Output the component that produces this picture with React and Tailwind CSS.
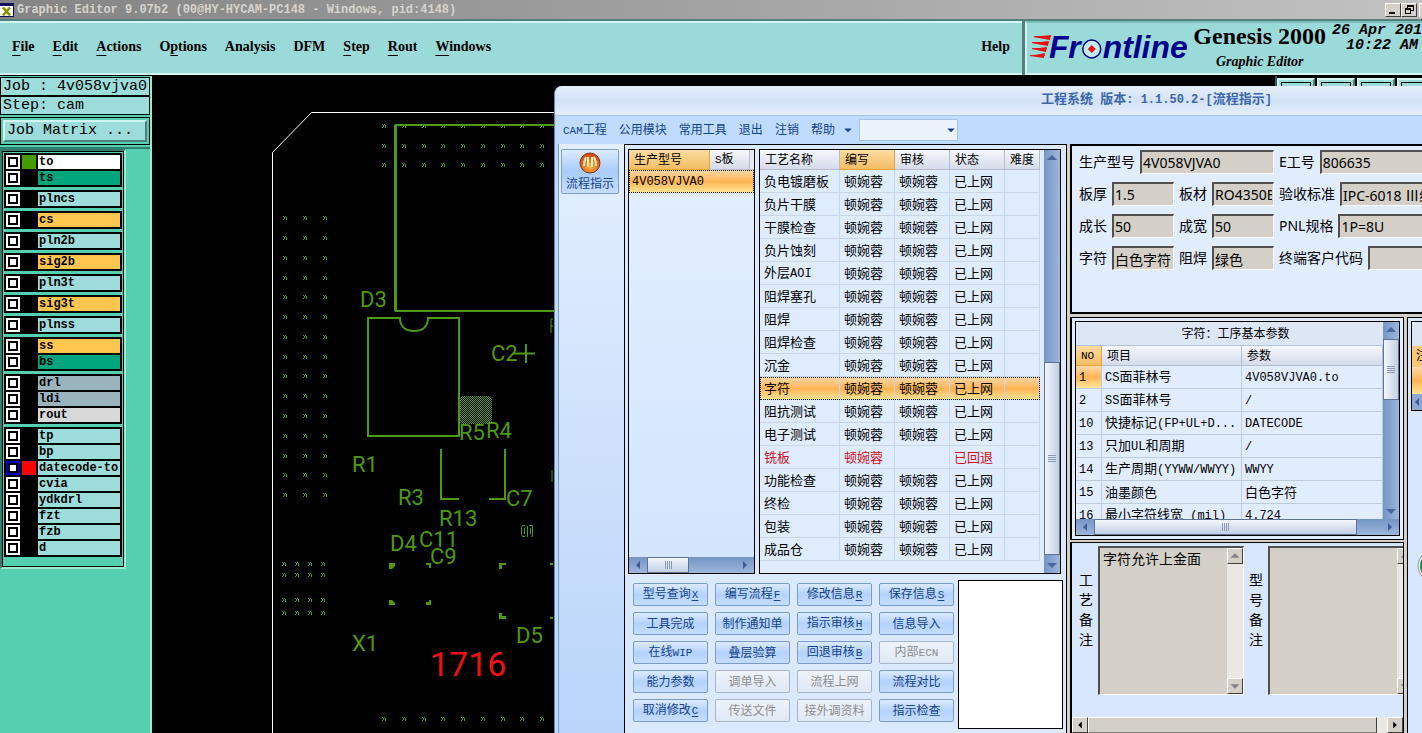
const layerGroups = [
  [
    { name: 'to', bg: 'bg-white', swatch: 'bg-[#449c00]' },
    { name: 'ts', bg: 'bg-[#00a57d]' },
  ],
  [{ name: 'plncs', bg: 'bg-[#9cdcda]' }],
  [{ name: 'cs', bg: 'bg-[#ffc64f]' }],
  [{ name: 'pln2b', bg: 'bg-[#9cdcda]' }],
  [{ name: 'sig2b', bg: 'bg-[#ffc64f]' }],
  [{ name: 'pln3t', bg: 'bg-[#9cdcda]' }],
  [{ name: 'sig3t', bg: 'bg-[#ffc64f]' }],
  [{ name: 'plnss', bg: 'bg-[#9cdcda]' }],
  [
    { name: 'ss', bg: 'bg-[#ffc64f]' },
    { name: 'bs', bg: 'bg-[#00a57d]' },
  ],
  [
    { name: 'drl', bg: 'bg-[#9ab4bd]' },
    { name: 'ldi', bg: 'bg-[#9ab4bd]' },
    { name: 'rout', bg: 'bg-[#d9d9d9]' },
  ],
  [
    { name: 'tp', bg: 'bg-[#9cdcda]' },
    { name: 'bp', bg: 'bg-[#9cdcda]' },
    { name: 'datecode-to', bg: 'bg-[#9cdcda]', swatch: 'bg-[#ff0000]', active: true },
    { name: 'cvia', bg: 'bg-[#9cdcda]' },
    { name: 'ydkdrl', bg: 'bg-[#9cdcda]' },
    { name: 'fzt', bg: 'bg-[#9cdcda]' },
    { name: 'fzb', bg: 'bg-[#9cdcda]' },
    { name: 'd', bg: 'bg-[#9cdcda]' },
  ],
]

// [before, mnemonic, after]
const editorMenu = [
  ['', 'F', 'ile'],
  ['', 'E', 'dit'],
  ['', 'A', 'ctions'],
  ['O', 'p', 'tions'],
  ['Analysis', '', ''],
  ['DFM', '', ''],
  ['', 'S', 'tep'],
  ['', 'R', 'out'],
  ['', 'W', 'indows'],
]

const processNames = [
  '负电镀磨板', '负片干膜', '干膜检查', '负片蚀刻', '外层AOI', '阻焊塞孔', '阻焊', '阻焊检查', '沉金',
  '字符', '阻抗测试', '电子测试', '铣板', '功能检查', '终检', '包装', '成品仓',
]

const actions = [
  { label: '型号查询', hotkey: 'X' },
  { label: '编写流程', hotkey: 'F' },
  { label: '修改信息', hotkey: 'R' },
  { label: '保存信息', hotkey: 'S' },
  { label: '工具完成' },
  { label: '制作通知单' },
  { label: '指示审核', hotkey: 'H' },
  { label: '信息导入' },
  { label: '在线WIP' },
  { label: '叠层验算' },
  { label: '回退审核', hotkey: 'B' },
  { label: '内部ECN', disabled: true },
  { label: '能力参数' },
  { label: '调单导入', disabled: true },
  { label: '流程上网', disabled: true },
  { label: '流程对比' },
  { label: '取消修改', hotkey: 'C' },
  { label: '传送文件', disabled: true },
  { label: '接外调资料', disabled: true },
  { label: '指示检查' },
]

const params = [
  ['1', 'CS面菲林号', '4V058VJVA0.to'],
  ['2', 'SS面菲林号', '/'],
  ['10', '快捷标记(FP+UL+D...', 'DATECODE'],
  ['13', '只加UL和周期', '/'],
  ['14', '生产周期(YYWW/WWYY)', 'WWYY'],
  ['15', '油墨颜色', '白色字符'],
  ['16', '最小字符线宽 (mil)', '4.724'],
]

// Latin runs are set in a mono face one step smaller than the Chinese text
function Mixed({ text, small }) {
  return text.split(/([\x20-\x7e]+)/).map((part, i) => {
    if (i % 2 === 0) return part
    return (
      <span key={i} className={`whitespace-pre font-['Liberation_Mono',monospace] ${small ? 'text-[11px]' : 'text-[12px]'}`}>
        {part}
      </span>
    )
  })
}

function Arrow({ dir, className }) {
  const d = {
    up: 'M0 6h10L5 1z',
    down: 'M0 2h10L5 7z',
    left: 'M7 0v8L3 4z',
    right: 'M3 0v8l4-4z',
  }[dir]
  return (
    <svg width="10" height="8" viewBox="0 0 10 8" className={className} aria-hidden="true">
      <path d={d} fill="currentColor" />
    </svg>
  )
}

function VScroll({ before, thumb }) {
  return (
    <div className="flex w-4 shrink-0 flex-col items-center bg-gradient-to-r from-[#7595c4] to-[#9db6dc] text-[#4a669c]" aria-hidden="true">
      <div className="flex h-4 shrink-0 items-center"><Arrow dir="up" /></div>
      <div className={before} />
      <div className={`flex w-full flex-col items-center justify-center gap-px border border-[#5f7396] bg-gradient-to-r from-[#f2f5fb] via-[#dbe2f0] to-[#c3cfe4] ${thumb}`}>
        {[0, 1, 2, 3].map((n) => <i key={n} className="h-px w-2 bg-[#8d9ab5]" />)}
      </div>
      <div className="flex-1" />
      <div className="flex h-4 shrink-0 items-center"><Arrow dir="down" /></div>
    </div>
  )
}

function HScroll({ thumb }) {
  return (
    <div className="flex h-4 shrink-0 items-center bg-gradient-to-b from-[#7595c4] to-[#9db6dc] text-[#3f5c95]" aria-hidden="true">
      <div className="flex w-[18px] justify-center"><Arrow dir="left" /></div>
      <div className={`flex h-full items-center justify-center gap-px border border-[#5f7396] bg-gradient-to-b from-[#f2f5fb] via-[#dbe2f0] to-[#c3cfe4] ${thumb}`}>
        {[0, 1, 2, 3].map((n) => <i key={n} className="h-2 w-px bg-[#8d9ab5]" />)}
      </div>
      <div className="flex-1" />
      <div className="flex w-[18px] justify-center"><Arrow dir="right" /></div>
    </div>
  )
}

function ClassicScrollButton({ dir, dim }) {
  return (
    <div className={`flex size-4 shrink-0 items-center justify-center border border-t-white border-l-white border-r-[#404040] border-b-[#404040] bg-[#d4d0c8] ${dim ? 'text-[#848284]' : 'text-black'}`}>
      <Arrow dir={dir} className="scale-90" />
    </div>
  )
}

function TitleBar() {
  return (
    <header className="flex h-[19px] shrink-0 items-center justify-between overflow-hidden bg-gradient-to-r from-[#848484] to-[#c2c2c2]">
      <div className="flex items-center gap-[3px]">
        <svg width="14" height="14" viewBox="0 0 14 14" aria-hidden="true">
          <path d="M0 0h14v14H0z" fill="#101060" />
          <path d="M0 3h13v10H0z" fill="#fff" />
          <path d="M3 4.500l7 8M10 4.500l-7 8" stroke="#8c8c00" strokeWidth="2.500" />
        </svg>
        <h1 className="font-['Liberation_Mono',monospace] text-[12px] leading-4 font-bold whitespace-pre text-[#d6d3ce]">
          Graphic Editor 9.07b2 (00@HY-HYCAM-PC148 - Windows, pid:4148)
        </h1>
      </div>
      <div className="flex">
        <button aria-label="Minimize" className="flex h-[14px] w-4 items-end border border-t-white border-l-white border-r-[#404040] border-b-[#404040] bg-[#d4d0c8] p-[2px]">
          <i className="ml-px h-[2px] w-[6px] bg-black" />
        </button>
        <button aria-label="Restore" className="flex h-[14px] w-4 items-center justify-center border border-t-white border-l-white border-r-[#404040] border-b-[#404040] bg-[#d4d0c8]">
          <svg width="9" height="9" viewBox="0 0 9 9" fill="none" stroke="#000" shapeRendering="crispEdges">
            <path d="M2.500 3V.500h6v5H6M2 1h7M.500 3.500h5v5h-5zM0 4h6" />
          </svg>
        </button>
        <div className="ml-[2px] h-[14px] w-[3px] border-t border-l border-white bg-[#d4d0c8]" />
      </div>
    </header>
  )
}

function FrontlineLogo() {
  return (
    <svg width="162" height="36" viewBox="0 0 162 36" role="img" aria-label="Frontline">
      <path d="M3 7l18-2-1 5zM1 13l18-2-1 5zM2 19l15-2-1 5zM0 26l15-3-1 5z" fill="#e81010" />
      <path d="M4 6.500h17M2 12.500h17M2 18.500h15M0 25.500h15" stroke="#e81010" />
      <g fill="#00008c" fontFamily="'Liberation Sans', sans-serif" fontWeight="bold" fontStyle="italic" fontSize="32">
        <text x="19" y="28">Fr</text>
        <text x="73" y="28">ntline</text>
      </g>
      <circle cx="62" cy="19" r="9" fill="#c4ecee" stroke="#00008c" strokeWidth="1.500" />
      <path d="M62 15l4 4-4 4-4-4z" fill="#e81010" />
    </svg>
  )
}

function EditorMenuBar() {
  return (
    <div className="flex h-14 shrink-0 gap-[3px] border-t-2 border-[#557f7c] bg-[#557f7c] font-['Liberation_Serif',serif] text-black">
      <nav className="flex min-w-0 flex-1 items-center justify-between border-t-2 border-b-2 border-t-[#d2f4f2] border-b-[#d2f4f2] bg-[#9adbda] px-3 pb-[2px] text-[14px] leading-5 font-bold">
        <div className="flex gap-[18px]">
          {editorMenu.map(([pre, key, post]) => (
            <a key={pre + key + post} href="#">
              {pre}
              <span className="underline underline-offset-4">{key}</span>
              {post}
            </a>
          ))}
        </div>
        <a href="#">Help</a>
      </nav>
      <div className="flex w-[397px] shrink-0 items-center overflow-hidden border-t-2 border-b-2 border-l-2 border-t-[#7cbcb9] border-b-[#d2f4f2] border-l-[#d2f4f2] bg-[#9adbda] pl-[3px]">
        <FrontlineLogo />
        <div className="ml-[2px] flex shrink-0 flex-col items-center">
          <p className="text-[24px] leading-6 font-bold">Genesis 2000</p>
          <p className="pt-1 text-[14px] leading-5 font-bold italic">Graphic Editor</p>
        </div>
        <div className="ml-[6px] shrink-0 self-start font-['Liberation_Mono',monospace] text-[15px] leading-[15px] font-bold whitespace-pre italic">
          <p>26 Apr 201</p>
          <p className="pl-[14px]">10:22 AM</p>
        </div>
      </div>
    </div>
  )
}

function LayerRow({ layer }) {
  return (
    <label className="flex h-4 items-start gap-[2px] pt-[2px]">
      <input
        type="checkbox"
        className={`size-[14px] shrink-0 appearance-none border-2 bg-white shadow-[inset_0_0_0_2px_#000] ${layer.active ? 'border-[#0000c8]' : 'border-white'}`}
      />
      <span className={`size-[14px] shrink-0 ${layer.swatch || 'bg-black'}`} />
      <span className={`h-[14px] min-w-0 flex-1 pl-px text-[12px] leading-[14px] font-bold whitespace-nowrap ${layer.bg}`}>
        {layer.name}
      </span>
    </label>
  )
}

function LayerSidebar() {
  return (
    <aside className="w-[152px] shrink-0 border-r-2 border-[#9ee8d2] bg-[#54cfb0] font-['Liberation_Mono',monospace] text-black">
      <div className="border-b-2 border-[#2f7f6c] pt-px pb-[2px]">
        <p className="h-[19px] border border-black bg-[#9cdcda] pl-[2px] text-[15px] leading-[17px] whitespace-pre">Job : 4v058vjva0</p>
        <p className="h-[19px] border border-black bg-[#9cdcda] pl-[2px] text-[15px] leading-[17px] whitespace-pre">Step: cam</p>
        <div className="mt-[2px] border border-black p-[2px]">
          <button className="block h-[22px] w-full border-2 border-t-[#d2f4f2] border-l-[#d2f4f2] border-r-[#4d8280] border-b-[#4d8280] bg-[#9cdcda] pl-[2px] text-left text-[15px] leading-[18px] whitespace-pre">
            Job Matrix ...
          </button>
        </div>
      </div>
      <div className="w-[126px] border-2 border-t-[#2f7f6c] border-l-[#2f7f6c] border-r-[#9ee8d2] border-b-[#9ee8d2]">
        <div className="flex flex-col gap-[3px] border border-black px-px pt-px pb-[9px]">
          {layerGroups.map((group) => (
            <div key={group[0].name} className="bg-black px-[2px] pb-[2px]">
              {group.map((layer) => <LayerRow key={layer.name} layer={layer} />)}
            </div>
          ))}
        </div>
      </div>
    </aside>
  )
}

const topX = [384, 404, 424, 443, 463, 483, 503, 522, 542]
const vias = [
  ...[126, 146, 165, 719].flatMap((y) => topX.map((x) => [x, y])),
  ...[218, 238, 258, 278, 297, 317, 337, 357, 376, 396, 416, 436, 456, 475, 495].flatMap((y) => [285, 305, 325].map((x) => [x, y])),
  ...[564, 575, 600, 613].flatMap((y) => [284, 297, 310, 323].map((x) => [x, y])),
]

const designators = [
  ['D3', 360, 307], ['C2', 491, 361], ['R5', 459, 440], ['R4', 486, 438], ['R1', 352, 472],
  ['R3', 398, 505], ['C7', 506, 506], ['R13', 439, 526], ['D4', 390, 551], ['C11', 419, 547],
  ['C9', 430, 564], ['X1', 352, 651], ['D5', 516, 643],
]

function BoardCanvas() {
  return (
    <main className="min-w-0 flex-1 bg-black">
      <svg width="100%" height="100%" role="img" aria-label="PCB layer view">
        <defs>
          <pattern id="hatch" width="2" height="2" patternUnits="userSpaceOnUse">
            <path d="M0 0h1v1H0zM1 1h1v1H1z" fill="#4c9a10" shapeRendering="crispEdges" />
          </pattern>
        </defs>
        <g transform="translate(-152 -76)" fill="none" stroke="#4c9a10">
          <path d="M272.500 733V152.500L311.500 112.500H640" stroke="#fff" />
          <path d="M640 125H396V311H640" strokeWidth="2" shapeRendering="crispEdges" />
          <path d="M395.500 125V311" strokeWidth="3" shapeRendering="crispEdges" />
          <path d="M368 436V318H400c0 8 5 13 14 13s14-5 14-13H459V436z" strokeWidth="2" />
          <path d="M513 353.500h22M526 344v19" strokeWidth="2" />
          <path d="M440.500 449V499h18M504.500 449V499h-16" strokeWidth="2" shapeRendering="crispEdges" />
          <rect x="460" y="396" width="32" height="28" rx="4" fill="url(#hatch)" stroke="none" />
          <path d="M525 525.500h-2.500l-1 2v7l1 2h2.500M524.500 528v6M527.500 526v11M529 525.500h3.500v11h-1M530.500 528v6" />
          <path d="M553 319h-2v14M553 326h-2M552 470v12" />
          <path
            fill="#4c9a10"
            stroke="none"
            d="M389 563h6v3l-3 3h-3zM426 563h5v5h-2v-3h-3zM389 600h3l3 3v2h-6zM431 600v5h-5v-3h3v-2zM499 563h7v2h-4v4h-3zM499 613h3v3h4v3h-7zM550 563h3v2h-3zM550 617h3v2h-3z"
          />
          {vias.map(([x, y]) => (
            <path key={`${x}-${y}`} d={`M${x - 2} ${y - 1.5}h1m1 0h1M${x - 1} ${y - 0.5}h1m1 0h1M${x - 1} ${y + 0.5}h1m1 0h1M${x - 2} ${y + 1.5}h1m2 0h1`} shapeRendering="crispEdges" />
          ))}
        </g>
        <g transform="translate(-152 -76)" fill="#4c9a10" fontFamily="Roboto, sans-serif" fontSize="22">
          {designators.map(([name, x, y]) => <text key={name} x={x} y={y}>{name}</text>)}
          <text x="430" y="676" fill="#ee1111" fontFamily="'Liberation Sans Narrow', Roboto, sans-serif" fontSize="34">1716</text>
        </g>
      </svg>
    </main>
  )
}

function EditorToolStrip() {
  return (
    <div className="flex w-[147px] shrink-0 gap-[2px] overflow-hidden border-l-2 border-[#2f5f58] bg-black pt-[2px]">
      {['a', 'b', 'c', 'd'].map((id) => (
        <button key={id} aria-label={`Tool ${id}`} className="h-9 w-[38px] shrink-0 border-2 border-t-[#d2f4f2] border-l-[#d2f4f2] border-r-[#4d8280] border-b-[#4d8280] bg-[#9cdcda] p-[2px]">
          <span className="block h-full border border-black" />
        </button>
      ))}
    </div>
  )
}

function AppMenu() {
  return (
    <nav className="flex h-7 shrink-0 items-center bg-[#bfdbff] pl-2 text-[12px] leading-4 text-[#15428b]">
      <div className="flex gap-3">
        {['CAM工程', '公用模块', '常用工具', '退出', '注销', '帮助'].map((item) => (
          <a key={item} href="#"><Mixed text={item} small /></a>
        ))}
      </div>
      <Arrow dir="down" className="ml-2 mr-[6px] scale-75" />
      <div className="relative flex items-center">
        <select aria-label="快速查找" className="h-[22px] w-[99px] appearance-none border border-[#a7c3ea] bg-[#eaf2fb]" />
        <Arrow dir="down" className="pointer-events-none absolute right-[2px] scale-75" />
      </div>
    </nav>
  )
}

function ModuleBar() {
  return (
    <aside className="w-[66px] shrink-0 border-l border-[#6f9dd9] bg-gradient-to-b from-[#e3efff] via-[#cfe1fb] to-[#b9d5fa] pt-[5px] pl-[2px]">
      <button className="flex h-[45px] w-[58px] flex-col items-center rounded-xs border border-[#7f9dc8] bg-gradient-to-b from-[#dcebff] via-[#a9cbfb] to-[#c6defe] text-[12px] leading-4 text-[#15428b]">
        <svg width="24" height="26" viewBox="0 0 24 26" aria-hidden="true">
          <defs>
            <radialGradient id="ball" cx=".5" cy=".7" r=".6">
              <stop offset="0" stopColor="#ffb640" />
              <stop offset="1" stopColor="#dd4a10" />
            </radialGradient>
          </defs>
          <circle cx="12" cy="13" r="10" fill="url(#ball)" stroke="#7c3a20" />
          <path d="M6 16c0-4 1-7 2-9M10 17V7M14 17V7M18 16c0-4-1-7-2-9" stroke="#fff0c0" strokeWidth="2" fill="none" />
        </svg>
        流程指示
      </button>
    </aside>
  )
}

const headCell = 'h-5 border-r border-b border-[#b3bdd1] bg-gradient-to-b from-[#f6f8fc] to-[#d5dbea] p-0 pl-[5px] text-left font-normal'
const headHot = 'h-5 border-r border-b border-[#e8a33c] bg-gradient-to-b from-[#fbdca0] to-[#f3bd62] p-0 pl-[5px] text-left font-normal'
const hotRow = 'bg-gradient-to-b from-[#ffd9a5] via-[#ffb454] to-[#ffe695] outline outline-1 -outline-offset-1 outline-dotted outline-black'

function ModelList() {
  return (
    <div className="flex w-[127px] shrink-0 flex-col border border-black bg-gradient-to-b from-[#e3efff] to-[#d2e4fd]">
      <table className="w-full table-fixed border-separate border-spacing-0 text-[12px] leading-4">
        <thead>
          <tr>
            <th className={`w-[81px] ${headHot}`}>生产型号</th>
            <th className={`w-10 ${headCell}`}><Mixed text="S板" small /></th>
            <th className="h-5 border-b border-[#b3bdd1] bg-[#e4e9f3]" />
          </tr>
        </thead>
        <tbody>
          <tr className={hotRow}>
            <td colSpan="3" className="h-[23px] p-0 pl-[3px]"><Mixed text="4V058VJVA0" /></td>
          </tr>
        </tbody>
      </table>
      <div className="flex-1" />
      <HScroll thumb="w-[42px]" />
    </div>
  )
}

function ProcessTable() {
  const cell = 'h-[23px] border-r border-b border-[#c9d6e8] p-0 pl-1 whitespace-nowrap'
  return (
    <div className="flex min-w-0 flex-1 border border-black bg-[#deecfd]">
      <div className="min-w-0 flex-1 pr-1">
        <table className="w-full table-fixed border-separate border-spacing-0 text-[13px] leading-4">
          <thead className="text-[12px]">
            <tr>
              <th className={`w-20 ${headCell}`}>工艺名称</th>
              <th className={`w-[55px] ${headHot}`}>编写</th>
              <th className={`w-[55px] ${headCell}`}>审核</th>
              <th className={`w-[55px] ${headCell}`}>状态</th>
              <th className={headCell}>难度</th>
            </tr>
          </thead>
          <tbody>
            {processNames.map((name) => {
              const returned = name === '铣板'
              return (
                <tr key={name} className={name === '字符' ? hotRow : returned ? 'text-[#d01020]' : ''}>
                  <td className={cell}><Mixed text={name} /></td>
                  <td className={cell}>顿婉蓉</td>
                  <td className={cell}>{returned ? '' : '顿婉蓉'}</td>
                  <td className={cell}>{returned ? '已回退' : '已上网'}</td>
                  <td className={cell} />
                </tr>
              )
            })}
          </tbody>
        </table>
      </div>
      <VScroll before="h-[196px]" thumb="h-[193px]" />
    </div>
  )
}

function ActionGrid() {
  return (
    <div className="flex justify-between pl-[5px]">
      <div className="grid grid-cols-4 content-start gap-x-[7px] gap-y-[6px] pt-[3px]">
        {actions.map(({ label, hotkey, disabled }) => (
          <button
            key={label}
            disabled={disabled}
            className={`h-[23px] w-[75px] rounded-xs border text-[12px] leading-4 whitespace-nowrap ${
              disabled
                ? 'border-[#a8b4c8] bg-gradient-to-b from-[#eef3fa] to-[#dfe8f5] text-[#8d8d8d]'
                : 'border-[#7a9bcb] bg-gradient-to-b from-[#dceaff] via-[#b4d2ff] to-[#c4dcff] text-[#15428b]'
            }`}
          >
            <Mixed text={label} small />
            {hotkey && <span className="ml-px font-['Liberation_Mono',monospace] text-[11px] underline underline-offset-2">{hotkey}</span>}
          </button>
        ))}
      </div>
      <div className="h-[149px] w-[105px] border border-black bg-white" />
    </div>
  )
}

function Field({ label, value, className }) {
  return (
    <label className={`flex shrink-0 items-center gap-[5px] ${className}`}>
      <span className="shrink-0">{label}</span>
      <input
        readOnly
        defaultValue={value}
        className="h-6 w-full min-w-0 border border-t-2 border-l-2 border-t-[#505050] border-l-[#505050] border-r-white border-b-white bg-[#d4d0c8] px-px"
      />
    </label>
  )
}

function OrderForm() {
  return (
    <form className="flex h-[170px] shrink-0 flex-col gap-2 overflow-hidden border-2 border-r-0 border-black bg-[#e1edff] pt-1 pl-[7px] text-[14px] leading-5">
      <div className="flex gap-[5px]">
        <Field label="生产型号" value="4V058VJVA0" className="w-[195px]" />
        <Field label="E工号" value="806635" className="w-[240px]" />
      </div>
      <div className="flex gap-[5px]">
        <Field label="板厚" value="1.5" className="w-[95px]" />
        <Field label="板材" value="RO4350B" className="w-[95px]" />
        <Field label="验收标准" value="IPC-6018 Ⅲ级" className="w-[240px]" />
      </div>
      <div className="flex gap-[5px]">
        <Field label="成长" value="50" className="w-[95px]" />
        <Field label="成宽" value="50" className="w-[95px]" />
        <Field label="PNL规格" value="1P=8U" className="w-[240px]" />
      </div>
      <div className="flex gap-[5px]">
        <Field label="字符" value="白色字符" className="w-[95px]" />
        <Field label="阻焊" value="绿色" className="w-[95px]" />
        <Field label="终端客户代码" value="" className="w-[240px]" />
      </div>
    </form>
  )
}

function ParamPanel() {
  const cell = 'h-[23px] border-r border-b border-[#bccbe0] p-0 pl-[3px] whitespace-nowrap overflow-hidden'
  return (
    <section className="h-[223px] shrink-0 border border-l-2 border-black bg-[#e1edff] p-[3px]">
      <div className="flex h-full flex-col border border-black">
        <div className="flex min-h-0 flex-1">
          <div className="min-w-0 flex-1 overflow-hidden">
            <table className="w-full table-fixed border-separate border-spacing-0 text-[13px] leading-4">
              <caption className="h-6 border-b border-[#b3c4de] bg-[#dde6f4] pl-3 text-[12px] leading-[23px]">字符：工序基本参数</caption>
              <thead className="text-[12px]">
                <tr>
                  <th className={`w-[26px] ${headHot}`}><Mixed text="NO" small /></th>
                  <th className={`w-[140px] ${headCell}`}>项目</th>
                  <th className={headCell}>参数</th>
                </tr>
              </thead>
              <tbody>
                {params.map(([no, item, value], i) => (
                  <tr key={no}>
                    <td className={`${cell} ${i === 0 ? 'bg-gradient-to-b from-[#ffd9a5] via-[#ffb454] to-[#ffe695]' : ''}`}><Mixed text={no} /></td>
                    <td className={cell}><Mixed text={item} /></td>
                    <td className={cell}><Mixed text={value} /></td>
                  </tr>
                ))}
              </tbody>
            </table>
          </div>
          <VScroll before="h-px" thumb="h-[61px]" />
        </div>
        <HScroll thumb="w-[263px]" />
      </div>
    </section>
  )
}

function Memo({ id, label, value }) {
  return (
    <div className="flex shrink-0 gap-[5px]">
      <label htmlFor={id} className="w-[14px] pt-6 leading-5">{label}</label>
      <div className="flex h-[149px] w-[146px] border border-t-2 border-l-2 border-t-[#505050] border-l-[#505050] border-r-white border-b-white bg-[#d4d0c8]">
        <textarea id={id} readOnly defaultValue={value} className="min-w-0 flex-1 resize-none overflow-hidden px-[3px] pt-px leading-5" />
        <div className="flex w-4 shrink-0 flex-col justify-between bg-[#eae8e4]" aria-hidden="true">
          <ClassicScrollButton dir="up" dim />
          <ClassicScrollButton dir="down" dim />
        </div>
      </div>
    </div>
  )
}

function MemoPanel() {
  return (
    <section className="flex min-h-0 flex-1 flex-col justify-between border-t border-r border-l-2 border-black bg-[#d8e7fe]">
      <div className="flex gap-[5px] overflow-hidden pt-[3px] pl-[7px] text-[14px]">
        <Memo id="memo-process" label="工艺备注" value="字符允许上金面" />
        <Memo id="memo-model" label="型号备注" value="" />
      </div>
      <div className="flex h-4 bg-[#eae8e4]" aria-hidden="true">
        <ClassicScrollButton dir="left" />
        <div className="w-[289px] border border-t-white border-l-white border-r-[#404040] border-b-[#808080] bg-[#d4d0c8]" />
        <div className="flex-1" />
        <ClassicScrollButton dir="right" />
      </div>
    </section>
  )
}

function SidePanel() {
  return (
    <section className="min-w-0 flex-1 overflow-hidden border-t border-l border-black bg-[#d8e7fe] pt-[3px] pl-[3px] text-[12px]">
      <div className="border border-r-0 border-black">
        <div className="h-6 bg-[#dde6f4]" />
        <div className="h-[21px] overflow-hidden bg-[#f6c878] pl-1 leading-5">注</div>
        <div className="h-[27px] bg-gradient-to-b from-[#ffd9a5] via-[#ffb454] to-[#ffe695]" />
        <div className="flex h-4 items-center bg-[#8ba7d2] text-[#3f5c95]"><Arrow dir="left" className="shrink-0" /></div>
      </div>
      <svg width="34" height="34" viewBox="0 0 34 34" className="mt-[138px] ml-[6px] max-w-none" aria-hidden="true">
        <circle cx="17" cy="17" r="16" fill="#f4f7f4" stroke="#8a9a90" />
        <circle cx="17" cy="17" r="14" fill="#168a3c" />
      </svg>
    </section>
  )
}

function EngineeringWindow() {
  return (
    <div className="absolute top-[86px] right-0 bottom-0 left-[554px] flex flex-col overflow-hidden rounded-tl-lg border-l border-[#5c86c0] bg-[#bfdbff] font-['Noto_Sans','Noto_Sans_CJK_SC',sans-serif] text-black">
      <div className="h-[30px] shrink-0 overflow-hidden border-b border-[#a9c4ea] bg-gradient-to-b from-[#e6effc] via-[#d2e1f7] to-[#e4eefd] pl-[486px] text-[13px] leading-6 font-bold whitespace-nowrap text-[#3d66a8]">
        <Mixed text="工程系统 版本: 1.1.50.2-[流程指示]" />
      </div>
      <AppMenu />
      <div className="flex min-h-0 flex-1 pl-[3px]">
        <ModuleBar />
        <section className="flex w-[443px] shrink-0 flex-col gap-[6px] border border-b-0 border-black bg-[#dbe9fe] px-[3px] pt-1">
          <div className="flex h-[425px] shrink-0 gap-1 pr-[2px]">
            <ModelList />
            <ProcessTable />
          </div>
          <ActionGrid />
        </section>
        <div className="flex min-w-0 flex-1 flex-col gap-[3px] bg-[#d4d0c8] pl-[3px]">
          <OrderForm />
          <div className="flex min-h-0 flex-1 gap-[3px]">
            <div className="flex w-[334px] shrink-0 flex-col gap-[2px]">
              <ParamPanel />
              <MemoPanel />
            </div>
            <SidePanel />
          </div>
        </div>
      </div>
    </div>
  )
}

export default function App() {
  return (
    <div className="relative flex h-screen w-full flex-col overflow-hidden bg-black">
      <TitleBar />
      <EditorMenuBar />
      <div className="flex min-h-0 flex-1 border-t border-black">
        <LayerSidebar />
        <BoardCanvas />
        <EditorToolStrip />
      </div>
      <EngineeringWindow />
    </div>
  )
}
